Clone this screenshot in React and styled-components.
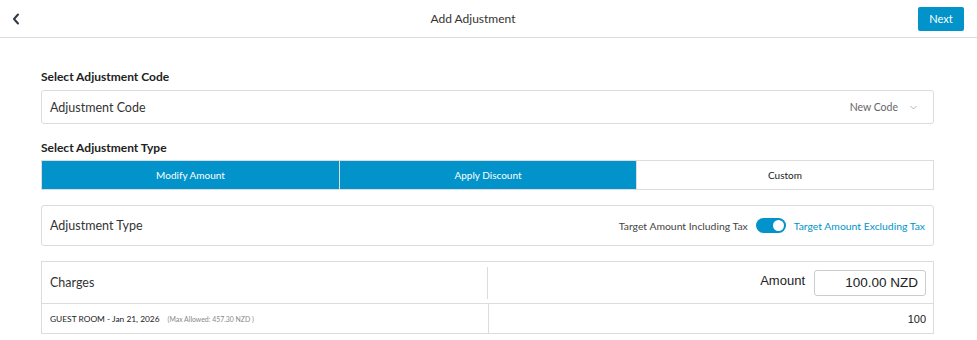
import React from "react";
import styled, { createGlobalStyle } from "styled-components";

const Global = createGlobalStyle`
  html, body { margin: 0; padding: 0; background: #fff; }
  body { font-family: Lato, "Open Sans", sans-serif; color: #333; }
  * { box-sizing: border-box; }
`;

const BLUE = "#0193c9";
const BORDER = "#dcdcdc";

const Header = styled.header`
  height: 38px;
  display: flex;
  align-items: center;
  border-bottom: 1px solid ${BORDER};
`;
const BackButton = styled.button`
  width: 28px;
  height: 37px;
  padding: 0 0 0 12px;
  border: 0;
  background: none;
  display: flex;
  align-items: center;
  cursor: pointer;
  color: #2f3a45;
`;
const Title = styled.h1`
  flex: 1;
  margin: 0;
  text-align: center;
  font-size: 12px;
  font-weight: 400;
  color: #333;
`;
const HeaderRight = styled.div`
  width: 59px;
  padding-right: 13px;
  display: flex;
  justify-content: flex-end;
`;
const NextButton = styled.button`
  width: 46px;
  height: 24px;
  border: 0;
  border-radius: 2px;
  background: ${BLUE};
  color: #fff;
  font-family: inherit;
  font-size: 11px;
  padding: 0;
`;

const Content = styled.main`
  padding: 31px 43px 0 41px;
`;
const SectionLabel = styled.h2`
  margin: 0 0 ${(p) => p.$gap || 6}px;
  font-size: 12px;
  line-height: 15px;
  font-weight: 700;
  color: #222;
`;
const Box = styled.div`
  display: flex;
  align-items: center;
  justify-content: space-between;
  height: ${(p) => p.$h}px;
  border: 1px solid ${BORDER};
  border-radius: 3px;
  padding: 0 8px 0 8px;
  margin-bottom: ${(p) => p.$mb || 0}px;
`;
const BoxLabel = styled.span`
  font-size: 12.5px;
  color: #333;
`;
const Select = styled.div`
  display: flex;
  align-items: center;
  gap: 12px;
  margin-right: 8px;
  font-size: 10.5px;
  color: #666;
`;
const Segmented = styled.div`
  display: grid;
  grid-template-columns: repeat(3, 1fr);
  height: 30px;
  border: 1px solid ${BORDER};
  margin-bottom: 15px;
`;
const Segment = styled.div`
  display: flex;
  align-items: center;
  justify-content: center;
  font-size: 10px;
  background: ${(p) => (p.$active ? BLUE : "#fff")};
  color: ${(p) => (p.$active ? "#fff" : "#222")};
  & + & {
    border-left: 1px solid ${(p) => (p.$active ? "#d6e9f3" : BORDER)};
  }
`;
const ToggleGroup = styled.div`
  display: flex;
  align-items: center;
  gap: 8px;
  font-size: 10.4px;
`;
const ToggleText = styled.span`
  color: ${(p) => (p.$on ? BLUE : "#444")};
`;
const Track = styled.span`
  width: 30px;
  height: 15px;
  border-radius: 8px;
  background: ${BLUE};
  display: flex;
  align-items: center;
  justify-content: flex-end;
  padding: 0 2px;
`;
const Knob = styled.span`
  width: 11px;
  height: 11px;
  border-radius: 50%;
  background: #fff;
`;
const Table = styled.div`
  border: 1px solid ${BORDER};
`;
const Row = styled.div`
  display: grid;
  grid-template-columns: 1fr 1fr;
  height: ${(p) => p.$h}px;
  & + & {
    border-top: 1px solid ${BORDER};
  }
`;
const Cell = styled.div`
  display: flex;
  align-items: center;
  justify-content: ${(p) => (p.$right ? "flex-end" : "flex-start")};
  padding: 0 7px 0 8px;
  gap: 9px;
  ${(p) => p.$divider && `border-left: 1px solid ${BORDER};`}
`;
const HeaderDividerCell = styled(Cell)`
  position: relative;
  &::before {
    content: "";
    position: absolute;
    left: -1px;
    top: 5px;
    bottom: 4px;
    width: 1px;
    background: ${BORDER};
  }
`;
const ChargesLabel = styled.span`
  font-size: 12.5px;
  color: #333;
`;
const ArialText = styled.span`
  font-family: "Liberation Sans", Arial, sans-serif;
  font-size: ${(p) => p.$size}px;
  color: #222;
  margin-bottom: ${(p) => p.$mb || 0}px;
`;
const AmountInput = styled.div`
  width: 112px;
  height: 26px;
  border: 1px solid #ccc;
  border-radius: 3px;
  display: flex;
  align-items: center;
  justify-content: flex-end;
  padding: 0 7px;
  font-family: "Liberation Sans", Arial, sans-serif;
  font-size: 13.5px;
  color: #222;
`;
const RoomText = styled.span`
  font-size: 8.4px;
  color: #222;
`;
const MaxText = styled.span`
  font-size: 6.9px;
  color: #888;
  margin-left: -1px;
`;

export default function App() {
  return (
    <>
      <Global />
      <Header>
        <BackButton aria-label="Back">
          <svg width="8" height="12" viewBox="0 0 8 12">
            <path d="M6 1.5L2 6l4 4.5" fill="none" stroke="#2f3a45" strokeWidth="2" strokeLinecap="round" strokeLinejoin="round" />
          </svg>
        </BackButton>
        <Title>Add Adjustment</Title>
        <HeaderRight>
          <NextButton>Next</NextButton>
        </HeaderRight>
      </Header>
      <Content>
        <SectionLabel>Select Adjustment Code</SectionLabel>
        <Box $h={34} $mb={16}>
          <BoxLabel>Adjustment Code</BoxLabel>
          <Select>
            New Code
            <svg width="7" height="5" viewBox="0 0 7 5">
              <path d="M0.5 1L3.5 4l3-3" fill="none" stroke="#aaa" strokeWidth="0.9" />
            </svg>
          </Select>
        </Box>
        <SectionLabel $gap={5}>Select Adjustment Type</SectionLabel>
        <Segmented>
          <Segment $active>Modify Amount</Segment>
          <Segment $active>Apply Discount</Segment>
          <Segment>Custom</Segment>
        </Segmented>
        <Box $h={41} $mb={15}>
          <BoxLabel>Adjustment Type</BoxLabel>
          <ToggleGroup>
            <ToggleText>Target Amount Including Tax</ToggleText>
            <Track>
              <Knob />
            </Track>
            <ToggleText $on>Target Amount Excluding Tax</ToggleText>
          </ToggleGroup>
        </Box>
        <Table>
          <Row $h={41}>
            <Cell>
              <ChargesLabel>Charges</ChargesLabel>
            </Cell>
            <HeaderDividerCell $right>
              <ArialText $size={13} $mb={5}>Amount</ArialText>
              <AmountInput>100.00 NZD</AmountInput>
            </HeaderDividerCell>
          </Row>
          <Row $h={30}>
            <Cell>
              <RoomText>GUEST ROOM - Jan 21, 2026</RoomText>
              <MaxText>(Max Allowed: 457.30 NZD )</MaxText>
            </Cell>
            <Cell $right $divider>
              <ArialText $size={11}>100</ArialText>
            </Cell>
          </Row>
        </Table>
      </Content>
    </>
  );
}
